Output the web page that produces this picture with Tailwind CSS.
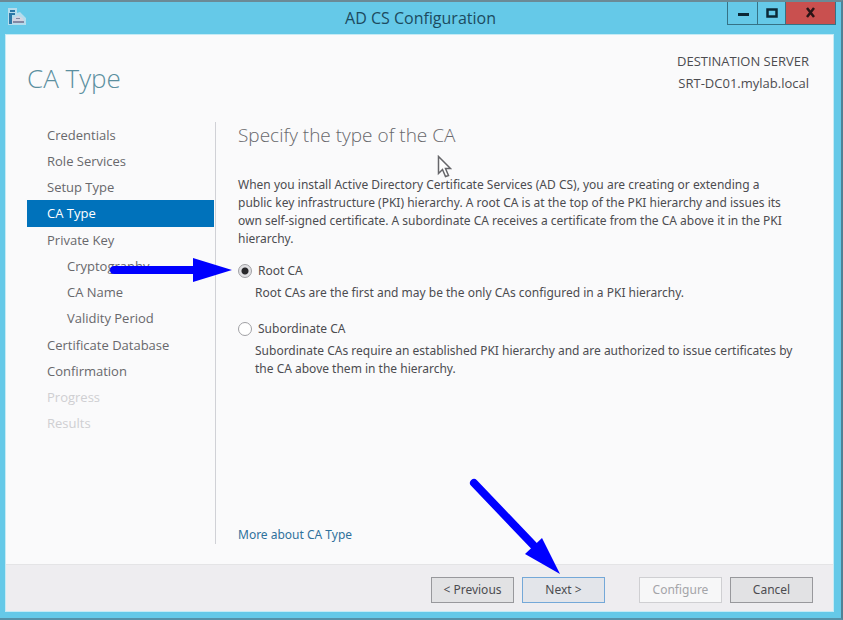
<!DOCTYPE html>
<html lang="en">
<head>
    <meta charset="UTF-8">
    <meta name="viewport" content="width=device-width, initial-scale=1.0">
    <title>AD CS Configuration</title>
    <script src="https://cdn.jsdelivr.net/npm/@tailwindcss/browser@4"></script>
</head>
<body class="min-h-screen flex flex-col bg-[#65c9e8] border-t-2 border-r-2 border-b-2 border-t-[#6b8a96] border-r-[#4f8296] border-b-[#5691a8] font-['Noto_Sans',sans-serif] text-[12px] leading-[18px] text-[#4c4c50]">

    <!-- Title bar -->
    <header class="relative h-8 flex items-center justify-center">
        <svg class="absolute left-2 top-1.5" width="18" height="18" viewBox="0 0 18 18">
            <path d="M0 0h9v5l3-1 3 3 3 3v7H0z" fill="#b5dcec"/>
            <path d="M2 2h5v2H2zM1 5h6v2H1zM1 7h3v9H1z" fill="#2b78a8"/>
            <path d="M4 12q1-3 4-3 2-3 4 0 3 0 4 4v2H4z" fill="#d3d5e2"/>
            <path d="M5 13h11v2H5zM8 10h4v1H8z" fill="#8388a3"/>
        </svg>
        <h1 class="font-['Open_Sans',sans-serif] text-[16px] text-[#1c4b60]">AD CS Configuration</h1>
        <div class="absolute right-[5px] top-0 h-[23px] flex border border-t-0 border-[#357286]">
            <button type="button" aria-label="Minimize" class="w-[30px] flex items-center justify-center border-r border-[#357286]">
                <svg width="12" height="12" viewBox="0 0 12 12"><path d="M1 6h11v3H1z" fill="#0b2836"/></svg>
            </button>
            <button type="button" aria-label="Maximize" class="w-[28px] flex items-center justify-center border-r border-[#357286]">
                <svg width="12" height="12" viewBox="0 0 12 12"><rect x="1.500" y="2.500" width="9" height="7" fill="none" stroke="#0b2836" stroke-width="2.500"/></svg>
            </button>
            <button type="button" aria-label="Close" class="w-[49px] flex items-center justify-center bg-[#c9504f]">
                <svg width="12" height="12" viewBox="0 0 12 12"><path d="M2 1l7 9M9 1l-7 9" stroke="#2a1416" stroke-width="2.500"/></svg>
            </button>
        </div>
    </header>

    <div class="flex-1 flex flex-col ml-[5px] mr-[7px] mb-1.5 bg-[#fafafb] border border-[#c5ebf5]">
        <div class="flex justify-between pl-[21px] pr-[24px] pt-[15px] font-['Open_Sans',sans-serif]">
            <h2 class="pt-3 text-[26px] leading-[32px] font-light text-[#5b8f9f]">CA Type</h2>
            <div class="text-right text-[13px] leading-[22px]">
                <p>DESTINATION SERVER</p>
                <p>SRT-DC01.mylab.local</p>
            </div>
        </div>

        <div class="flex-1 flex pl-[21px] pr-[20px] pt-7 pb-5">
            <!-- Wizard steps -->
            <nav class="w-[189px] shrink-0 border-r border-[#d0d1d6] font-['Open_Sans',sans-serif] text-[13px] leading-[26px] text-[#68686c]">
                <ul class="mr-px">
                    <li class="pl-5"><a href="#">Credentials</a></li>
                    <li class="pl-5"><a href="#">Role Services</a></li>
                    <li class="pl-5"><a href="#">Setup Type</a></li>
                    <li class="pl-5 bg-[#0072bb] text-white leading-[27px]"><a href="#" aria-current="step">CA Type</a></li>
                    <li class="pl-5"><a href="#">Private Key</a>
                        <ul class="pl-5 pb-px">
                            <li><a href="#">Cryptography</a></li>
                            <li><a href="#">CA Name</a></li>
                            <li><a href="#">Validity Period</a></li>
                        </ul>
                    </li>
                    <li class="pl-5"><a href="#">Certificate Database</a></li>
                    <li class="pl-5"><a href="#">Confirmation</a></li>
                    <li class="pl-5 text-[#cfcfd2]">Progress</li>
                    <li class="pl-5 text-[#cfcfd2]">Results</li>
                </ul>
            </nav>

            <main class="flex-1 flex flex-col items-start pl-[22px]">
                <div class="relative">
                    <h3 class="font-['Open_Sans',sans-serif] text-[19px] leading-[26px] font-light text-[#68686c]">Specify the type of the CA</h3>
                    <!-- Mouse pointer -->
                    <svg class="absolute left-[199px] top-[33px]" width="15" height="24" viewBox="0 0 15 24">
                        <path d="M1.500 1.500v17l4-4 3 7 3-1-3-7h5z" fill="#fff" stroke="#66666a" stroke-width="1.500"/>
                    </svg>
                </div>
                <p class="mt-7">When you install Active Directory Certificate Services (AD CS), you are creating or extending a<br>public key infrastructure (PKI) hierarchy. A root CA is at the top of the PKI hierarchy and issues its<br>own self-signed certificate. A subordinate CA receives a certificate from the CA above it in the PKI<br>hierarchy.</p>

                <div class="relative mt-3.5">
                    <div class="flex items-center gap-[6px]">
                        <input type="radio" name="ca" id="root" checked aria-describedby="root-info" class="appearance-none size-[14px] rounded-full border border-[#a0a0a4] bg-white checked:bg-[radial-gradient(circle,#28282b_3px,#e0e0e3_4px)]">
                        <label for="root">Root CA</label>
                    </div>
                    <p id="root-info" class="mt-1 pl-[17px]">Root CAs are the first and may be the only CAs configured in a PKI hierarchy.</p>
                    <!-- Callout arrow to the selected option -->
                    <svg class="absolute left-[-129px] top-[-5px]" width="124" height="26" viewBox="0 0 124 26">
                        <path d="M5 13h80" stroke="#00f" stroke-width="8" stroke-linecap="round"/>
                        <path d="M84 1l39 12-39 12z" fill="#00f"/>
                    </svg>
                </div>

                <div class="mt-[18px]">
                    <div class="flex items-center gap-[6px]">
                        <input type="radio" name="ca" id="sub" aria-describedby="sub-info" class="appearance-none size-[14px] rounded-full border border-[#a0a0a4] bg-white checked:bg-[radial-gradient(circle,#28282b_3px,#e0e0e3_4px)]">
                        <label for="sub">Subordinate CA</label>
                    </div>
                    <p id="sub-info" class="mt-1 pl-[17px]">Subordinate CAs require an established PKI hierarchy and are authorized to issue certificates by<br>the CA above them in the hierarchy.</p>
                </div>

                <a href="#" class="mt-auto text-[#2f719b]">More about CA Type</a>
            </main>
        </div>

        <footer class="flex justify-end pt-3 pb-2 pr-[20px] bg-[#eeedf0] border-t border-[#e4e4e6]">
            <button type="button" class="w-[83px] h-[26px] mr-2 border border-[#98989c] bg-[#e2e2e4]">&lt; Previous</button>
            <div class="relative mr-[34px]">
                <button type="button" class="w-[83px] h-[26px] border border-[#74a8d8] bg-[#e3e5ea]">Next &gt;</button>
                <!-- Callout arrow to the button -->
                <svg class="absolute left-[-54px] bottom-[28px]" width="94" height="98" viewBox="0 0 94 98">
                    <path d="M6 6l64 67" stroke="#00f" stroke-width="8" stroke-linecap="round"/>
                    <path d="M74 61L57 77 92 97z" fill="#00f"/>
                </svg>
            </div>
            <button type="button" disabled class="w-[83px] h-[26px] mr-2 border border-[#cfcfd2] bg-[#f7f7f8] text-[#a4a4a8]">Configure</button>
            <button type="button" class="w-[83px] h-[26px] border border-[#98989c] bg-[#e2e2e4]">Cancel</button>
        </footer>
    </div>
</body>
</html>
